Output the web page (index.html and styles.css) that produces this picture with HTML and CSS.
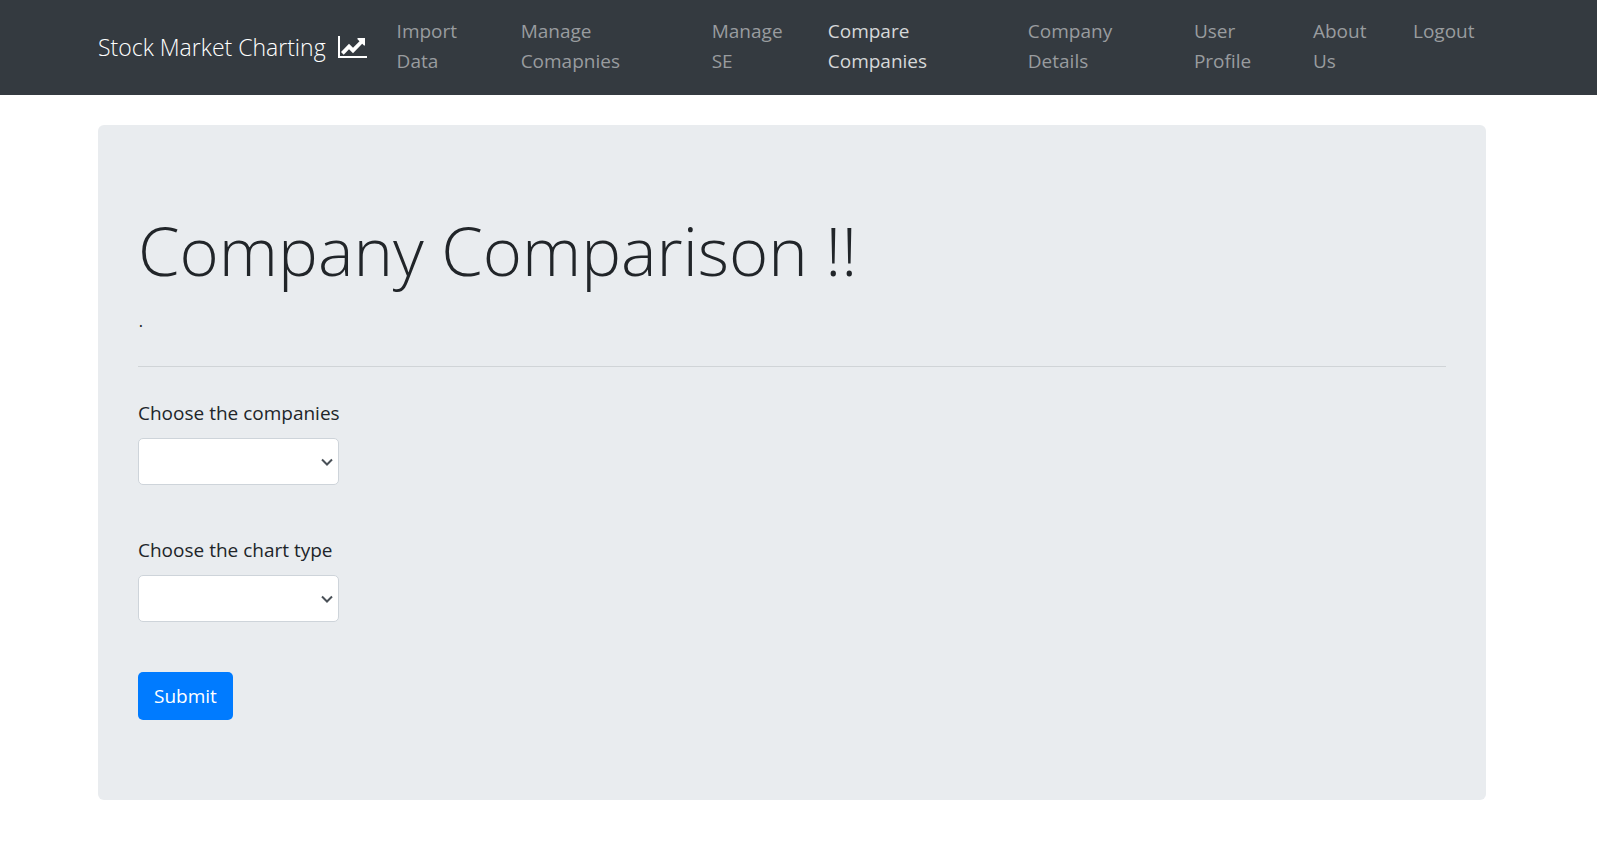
FILE: index.html
```html
<!DOCTYPE html>
<html lang="en">
<head>
<meta charset="utf-8">
<meta name="viewport" content="width=device-width, initial-scale=1">
<title>Stock Market Charting</title>
<link rel="stylesheet" href="styles.css">
</head>
<body>
<header class="navbar">
  <nav class="container navbar-row">
    <a class="brand" href="#">
      <span>Stock Market Charting</span>
      <svg class="brand-icon" viewBox="0 0 29 22" aria-hidden="true">
        <path d="M0 0h2v20h27v2H0z"/>
        <path d="M3 16L11 7.700L15 11.700L21.500 5.200L19.500 3.200V2H27V9.500H26L24.200 7.800L15 17.200L11 13.200L5.700 18.700z"/>
      </svg>
    </a>
    <ul class="nav-list">
      <li><a class="nav-link" href="#">Import<br>Data</a></li>
      <li><a class="nav-link" href="#">Manage<br>Comapnies</a></li>
      <li><a class="nav-link" href="#">Manage<br>SE</a></li>
      <li><a class="nav-link active" href="#">Compare<br>Companies</a></li>
      <li><a class="nav-link" href="#">Company<br>Details</a></li>
      <li><a class="nav-link" href="#">User<br>Profile</a></li>
      <li><a class="nav-link" href="#">About<br>Us</a></li>
      <li><a class="nav-link" href="#">Logout</a></li>
    </ul>
  </nav>
</header>
<main class="page">
  <div class="container">
    <section class="jumbotron">
      <h1 class="title">Company Comparison !!</h1>
      <p class="lead">.</p>
      <hr class="divider">
      <form class="form">
        <div class="form-group">
          <label for="companies">Choose the companies</label>
          <div class="select">
            <select id="companies" class="form-control"></select>
            <svg class="chevron" viewBox="0 0 12 8" aria-hidden="true"><path d="M1 1.500L6 6.500L11 1.500"/></svg>
          </div>
        </div>
        <div class="form-group">
          <label for="chart-type">Choose the chart type</label>
          <div class="select">
            <select id="chart-type" class="form-control"></select>
            <svg class="chevron" viewBox="0 0 12 8" aria-hidden="true"><path d="M1 1.500L6 6.500L11 1.500"/></svg>
          </div>
        </div>
        <button class="btn" type="button">Submit</button>
      </form>
    </section>
  </div>
</main>
</body>
</html>
```

FILE: styles.css
```css
* {
  box-sizing: border-box;
}

body {
  margin: 0;
  background: #fff;
  color: #212529;
  font-family: "Segoe UI", "Open Sans", "Noto Sans", sans-serif;
  font-size: 19px;
  line-height: 30px;
}

.container {
  width: 100%;
  max-width: 1428px;
  margin: 0 auto;
  padding: 0 20px;
}

.navbar,
.page {
  padding-right: 13px;
}

.navbar {
  background: #343a40;
}

.navbar-row {
  display: flex;
  align-items: center;
  min-height: 95px;
}

.brand {
  display: flex;
  flex: none;
  align-items: center;
  gap: 12px;
  margin-right: 20px;
  padding-bottom: 2px;
  color: #fff;
  font-size: 23px;
  font-weight: 300;
  text-decoration: none;
  white-space: nowrap;
}

.brand-icon {
  width: 29px;
  height: 22px;
  fill: #fff;
}

.nav-list {
  display: grid;
  flex: 1;
  grid-template-columns: 124fr 191fr 116fr 200fr 166fr 119fr 100fr 83fr;
  margin: 0;
  padding: 0 0 4px;
  list-style: none;
}

.nav-link {
  display: block;
  padding: 0 0 0 10px;
  color: #999c9f;
  text-decoration: none;
}

.nav-link.active {
  color: #d6d8d9;
}

.jumbotron {
  margin: 30px 0;
  padding: 80px 40px;
  border-radius: 6px;
  background: #e9ecef;
}

.title {
  margin: 0 0 4px;
  font-size: 67px;
  font-weight: 300;
  line-height: 90px;
}

.lead {
  margin: 0;
  font-size: 24px;
  font-weight: 300;
  line-height: 37px;
}

.divider {
  margin: 30px 0 31px;
  border: 0;
  border-top: 1px solid #d0d4d7;
}

.form {
  display: flex;
  flex-direction: column;
  align-items: flex-start;
  gap: 50px;
}

.form-group {
  display: flex;
  flex-direction: column;
  gap: 9px;
  width: 201px;
}

.form-group label {
  line-height: 31px;
  white-space: nowrap;
}

.select {
  display: grid;
  align-items: center;
}

.select > * {
  grid-area: 1 / 1;
}

.form-control {
  width: 100%;
  height: 47px;
  padding: 8px 12px;
  border: 1px solid #ced4da;
  border-radius: 5px;
  appearance: none;
  background: #fff;
  color: #495057;
  font: inherit;
}

.chevron {
  justify-self: end;
  width: 12px;
  height: 8px;
  margin-right: 6px;
  fill: none;
  stroke: #495057;
  stroke-width: 2;
  pointer-events: none;
}

.btn {
  height: 48px;
  padding: 0 16px;
  border: 0;
  border-radius: 5px;
  background: #007bff;
  color: #fff;
  font: inherit;
}
```
